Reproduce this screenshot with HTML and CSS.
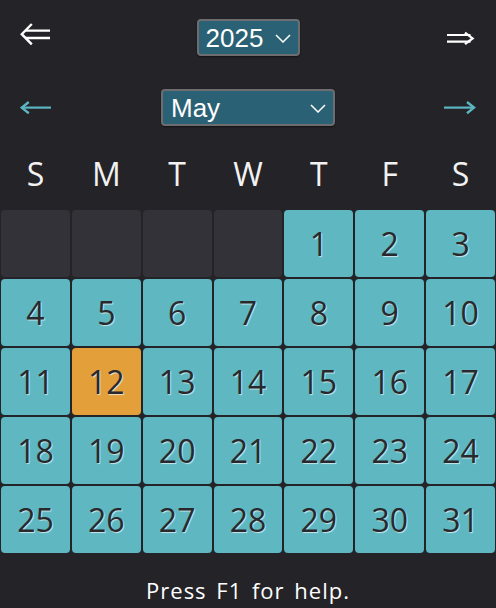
FILE: index.html
```html
<!DOCTYPE html>
<html lang="en">
<head>
<meta charset="utf-8">
<title>Calendar</title>
<link rel="stylesheet" href="styles.css">
</head>
<body>
<div class="app">
  <div class="nav-row year-row">
    <div class="nav-left">
      <svg class="arr-dbl-left" width="30" height="37" viewBox="0 0 30 37" aria-label="previous year">
        <path d="M11.8 5 L1.8 15.2 L11.8 25.4" fill="none" stroke="#fff" stroke-width="2.4"/>
        <path d="M5.6 11.7 H30 M5.6 19 H30" fill="none" stroke="#fff" stroke-width="2.3"/>
      </svg>
    </div>
    <div class="select year-select">
      <span class="select-text">2025</span>
      <svg class="chev" width="16" height="9" viewBox="0 0 16 9"><path d="M1 1 L8 8 L15 1" fill="none" stroke="#fff" stroke-width="1.5"/></svg>
    </div>
    <div class="nav-right">
      <svg class="arr-dbl-right" width="30" height="37" viewBox="0 0 30 37" aria-label="next year">
        <path d="M1 16 H24.5 M1 22.7 H24.5" fill="none" stroke="#fff" stroke-width="2.2"/>
        <path d="M19 13.6 L26.6 19.4 L19 25.2" fill="none" stroke="#fff" stroke-width="2.3"/>
      </svg>
    </div>
  </div>

  <div class="nav-row month-row">
    <div class="nav-left">
      <svg width="32" height="37" viewBox="0 0 32 37" aria-label="previous month">
        <path d="M2 18.6 H31" fill="none" stroke="#5bb6c1" stroke-width="2.2"/>
        <path d="M8.8 13 L1.8 18.6 L8.8 24.2" fill="none" stroke="#5bb6c1" stroke-width="2.4"/>
      </svg>
    </div>
    <div class="select month-select">
      <span class="select-text">May</span>
      <svg class="chev" width="16" height="9" viewBox="0 0 16 9"><path d="M1 1 L8 8 L15 1" fill="none" stroke="#fff" stroke-width="1.5"/></svg>
    </div>
    <div class="nav-right">
      <svg width="32" height="37" viewBox="0 0 32 37" aria-label="next month">
        <path d="M0 18.6 H29" fill="none" stroke="#5bb6c1" stroke-width="2.2"/>
        <path d="M23 13 L30 18.6 L23 24.2" fill="none" stroke="#5bb6c1" stroke-width="2.4"/>
      </svg>
    </div>
  </div>

  <div class="weekdays">
    <span>S</span><span>M</span><span>T</span><span>W</span><span>T</span><span>F</span><span>S</span>
  </div>

  <div class="grid">
    <div class="cell empty"></div>
    <div class="cell empty"></div>
    <div class="cell empty"></div>
    <div class="cell empty"></div>
    <div class="cell">1</div>
    <div class="cell">2</div>
    <div class="cell">3</div>
    <div class="cell">4</div>
    <div class="cell">5</div>
    <div class="cell">6</div>
    <div class="cell">7</div>
    <div class="cell">8</div>
    <div class="cell">9</div>
    <div class="cell">10</div>
    <div class="cell">11</div>
    <div class="cell today">12</div>
    <div class="cell">13</div>
    <div class="cell">14</div>
    <div class="cell">15</div>
    <div class="cell">16</div>
    <div class="cell">17</div>
    <div class="cell">18</div>
    <div class="cell">19</div>
    <div class="cell">20</div>
    <div class="cell">21</div>
    <div class="cell">22</div>
    <div class="cell">23</div>
    <div class="cell">24</div>
    <div class="cell">25</div>
    <div class="cell">26</div>
    <div class="cell">27</div>
    <div class="cell">28</div>
    <div class="cell">29</div>
    <div class="cell">30</div>
    <div class="cell">31</div>
  </div>

  <div class="footer">Press F1 for help.</div>
</div>
</body>
</html>
```

FILE: styles.css
```css
html, body {
  margin: 0;
  padding: 0;
  background: #242328;
}

.app {
  width: 496px;
  height: 608px;
  background: #242328;
  font-family: "Open Sans", "Noto Sans", sans-serif;
  color: #f0f0f0;
  overflow: hidden;
}

.nav-row {
  display: grid;
  grid-template-columns: 1fr auto 1fr;
  align-items: center;
  padding: 0 20px;
  height: 37px;
}

.year-row {
  margin-top: 19px;
}

.month-row {
  margin-top: 33px;
}

.nav-left {
  display: flex;
  justify-content: flex-start;
}

.nav-right {
  display: flex;
  justify-content: flex-end;
}

.nav-left svg,
.nav-right svg {
  display: block;
}

.select {
  box-sizing: border-box;
  height: 37px;
  display: flex;
  align-items: center;
  justify-content: space-between;
  background: #2b6175;
  border: 2px solid #6d6d70;
  border-radius: 4px;
  box-shadow: 0 1px 2px rgba(0, 0, 0, 0.5);
  font-family: "Liberation Sans", Arial, sans-serif;
  font-size: 26px;
  color: #ffffff;
}

.year-select {
  width: 103px;
  padding: 0 7px 0 7px;
}

.month-select {
  width: 174px;
  padding: 0 7px 0 8px;
}

.select-text {
  line-height: 1;
}

.chev {
  display: block;
  margin-top: 1px;
}

.weekdays {
  display: grid;
  grid-template-columns: repeat(7, 1fr);
  padding: 0 1px;
  column-gap: 2px;
  margin-top: 28px;
  height: 40px;
  line-height: 40px;
  margin-bottom: 16px;
  font-size: 32px;
  color: #f2f2f2;
  text-align: center;
}

.grid {
  display: grid;
  grid-template-columns: repeat(7, 1fr);
  grid-auto-rows: 67px;
  gap: 2px;
  padding: 0 1px;
}

.cell {
  display: flex;
  align-items: center;
  justify-content: center;
  background: #5eb7c1;
  border-radius: 4px;
  font-size: 32px;
  color: #29292d;
  text-shadow: 1px 1px 1px rgba(235, 248, 250, 0.75);
}

.cell.empty {
  background: #333238;
}

.cell.today {
  background: #e39f3a;
}

.footer {
  padding-top: 23px;
  text-align: center;
  font-size: 22px;
  line-height: 28px;
  letter-spacing: 1px;
  word-spacing: 3px;
  color: #ffffff;
}
```
